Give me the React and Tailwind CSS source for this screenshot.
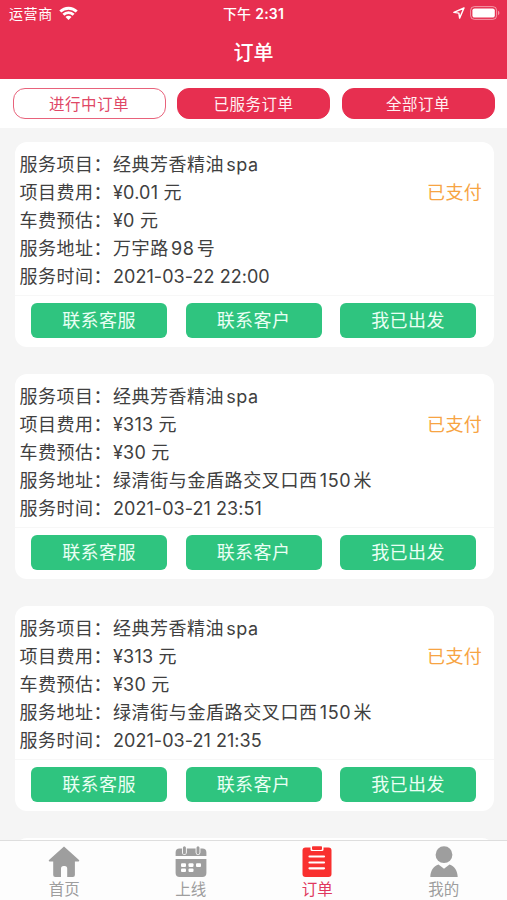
import { useState } from "react";

const filters = ["进行中订单", "已服务订单", "全部订单"];

const orders = [
  {
    id: 1,
    project: "经典芳香精油spa",
    price: "¥0.01 元",
    carFee: "¥0 元",
    address: "万宇路98号",
    time: "2021-03-22 22:00",
  },
  {
    id: 2,
    project: "经典芳香精油spa",
    price: "¥313 元",
    carFee: "¥30 元",
    address: "绿清街与金盾路交叉口西150米",
    time: "2021-03-21 23:51",
  },
  {
    id: 3,
    project: "经典芳香精油spa",
    price: "¥313 元",
    carFee: "¥30 元",
    address: "绿清街与金盾路交叉口西150米",
    time: "2021-03-21 21:35",
  },
];

function WifiIcon() {
  return (
    <svg width="19" height="14" viewBox="0 0 19 14" fill="white" className="-mt-0.5">
      <path d="M0.3 4.5a13 13 0 0 1 18.4 0l-2 2.100a10.300 10.300 0 0 0-14.400 0z" />
      <path d="M3.4 7.800a8.600 8.600 0 0 1 12.200 0l-2 2a5.800 5.800 0 0 0-8.200 0z" />
      <path d="M6.5 10.900a4.200 4.200 0 0 1 6 0L9.500 14z" />
    </svg>
  );
}

function LocationIcon() {
  return (
    <svg width="12" height="12" viewBox="0 0 12 12" fill="none">
      <path
        d="M11 1 0.900 5.400l5 .7.7 5z"
        stroke="white"
        strokeWidth="1.4"
        strokeLinejoin="round"
      />
    </svg>
  );
}

function BatteryIcon() {
  return (
    <svg width="30" height="14" viewBox="0 0 30 14" fill="none">
      <rect x="0.6" y="0.6" width="26" height="12.8" rx="3.8" stroke="white" strokeOpacity="0.5" />
      <rect x="2.4" y="2.4" width="22.4" height="9.2" rx="2.2" fill="white" />
      <path d="M28 4.8a2.4 2.4 0 0 1 0 4.4z" fill="white" fillOpacity="0.5" />
    </svg>
  );
}

function HomeIcon() {
  return (
    <svg width="32" height="32" viewBox="0 0 32 32" fill="currentColor">
      <path d="M16 0.4 31 14a0.8 0.8 0 0 1-.5 1.4H26.9V29a2 2 0 0 1-2 2H19.2V22.500a2.500 2.500 0 0 0-2.500-2.500H15.500a2.500 2.500 0 0 0-2.500 2.500V31H7.2a2 2 0 0 1-2-2V15.400H1.500A0.8 0.8 0 0 1 1 14z" />
    </svg>
  );
}

function CalendarIcon() {
  return (
    <svg width="32" height="32" viewBox="0 0 32 32" fill="currentColor">
      <path d="M4.600 2.500H27.400a4 4 0 0 1 4 4V10H0.600V6.500a4 4 0 0 1 4-4z" />
      <path d="M0.600 13H31.400V27a4 4 0 0 1-4 4H4.600a4 4 0 0 1-4-4z" />
      <g stroke="white" strokeWidth="4.800" strokeLinecap="round">
        <path d="M9.400 2.500V6.500M23 2.500V6.500" />
      </g>
      <g stroke="currentColor" strokeWidth="3" strokeLinecap="round">
        <path d="M9.400 1.800V6.700M23 1.800V6.700" />
      </g>
      <g fill="white">
        <rect x="6" y="17.300" width="5" height="3.600" rx="1" />
        <rect x="13.500" y="17.300" width="5" height="3.600" rx="1" />
        <rect x="21" y="17.300" width="5" height="3.600" rx="1" />
        <rect x="6" y="22.500" width="5" height="3.600" rx="1" />
        <rect x="13.500" y="22.500" width="5" height="3.600" rx="1" />
      </g>
    </svg>
  );
}

function OrderIcon() {
  return (
    <svg width="32" height="32" viewBox="0 0 32 32">
      <rect x="1.500" y="1.500" width="29" height="29.500" rx="3" fill="#f9302f" />
      <path d="M9.500 0H22.500V3.500a1.500 1.500 0 0 1-1.500 1.500H11a1.500 1.500 0 0 1-1.500-1.500z" fill="white" />
      <rect x="11" y="0.300" width="10" height="3.600" rx="0.800" fill="#f9302f" />
      <g stroke="white" strokeWidth="2.200" strokeLinecap="round">
        <path d="M8.500 10.500H23M8.500 16.500H23M8.500 22.300H23" />
      </g>
    </svg>
  );
}

function UserIcon() {
  return (
    <svg width="32" height="32" viewBox="0 0 32 32" fill="currentColor">
      <circle cx="16" cy="8.700" r="8.400" />
      <path d="M10.500 18.400 16 22.700 21.500 18.400C26.500 20.200 29.600 24.500 29.700 31H2.300C2.400 24.500 5.500 20.200 10.500 18.400z" />
    </svg>
  );
}

const tabs = [
  { name: "首页", icon: HomeIcon },
  { name: "上线", icon: CalendarIcon },
  { name: "订单", icon: OrderIcon },
  { name: "我的", icon: UserIcon },
];

function OrderRow({ label, value, status, valueClass = "tracking-[0.6px]" }) {
  return (
    <div className="flex h-7 items-center whitespace-pre">
      <span className="w-[93.500px] shrink-0 tracking-[0.5px]">{label}：</span>
      <span className={`flex-1 [text-autospace:normal] ${valueClass}`}>{value}</span>
      {status && <span className="tracking-[0.3px] text-[#f7a443]">{status}</span>}
    </div>
  );
}

function OrderCard({ order }) {
  return (
    <div className="h-[205px] shrink-0 rounded-xl bg-white">
      <div className="h-[154px] border-b border-[#f7f7f7] pt-[9px] pr-3 pl-[5px] text-lg leading-7 text-[#404040]">
        <OrderRow label="服务项目" value={order.project} valueClass="tracking-[0.5px]" />
        <OrderRow label="项目费用" value={order.price} status="已支付" valueClass="tracking-[0.2px]" />
        <OrderRow label="车费预估" value={order.carFee} valueClass="tracking-[0.2px]" />
        <OrderRow label="服务地址" value={order.address} />
        <OrderRow label="服务时间" value={order.time} valueClass="tracking-[0.05px]" />
      </div>
      <div className="flex justify-between pt-[7px] pr-[18px] pl-[16.500px]">
        {["联系客服", "联系客户", "我已出发"].map((action) => (
          <button
            key={action}
            className="h-[35px] w-[136px] rounded-md bg-[#2fc47f] text-lg leading-[35px] tracking-[0.4px] text-[#eafff4]"
          >
            {action}
          </button>
        ))}
      </div>
    </div>
  );
}

export default function App() {
  const [filter, setFilter] = useState("进行中订单");
  const [tab, setTab] = useState("订单");

  return (
    <div className="flex h-[900px] w-[507px] flex-col overflow-hidden bg-[#f5f5f5] font-['Inter','Noto_Sans_CJK_SC',sans-serif]">
      <header className="h-[79px] shrink-0 bg-[#e72f50] text-white">
        <div className="grid h-7 grid-cols-3 items-center px-[9px] text-sm">
          <div className="flex items-center gap-1.5">
            <span className="tracking-[0.6px]">运营商</span>
            <WifiIcon />
          </div>
          <div className="text-center font-medium tracking-[0.2px] [text-autospace:no-autospace]">
            下午 <span className="font-semibold">2:31</span>
          </div>
          <div className="-mr-0.5 flex -translate-y-px items-center justify-end gap-[5px]">
            <LocationIcon />
            <BatteryIcon />
          </div>
        </div>
        <h1 className="text-center text-xl leading-[50px] font-medium">订单</h1>
      </header>

      <div className="flex h-[49px] shrink-0 justify-between bg-white px-[12.500px] pt-[9px]">
        {filters.map((name) => (
          <button
            key={name}
            onClick={() => setFilter(name)}
            className={`h-[31px] w-[153px] rounded-xl border pt-px text-[15.500px] leading-[29px] tracking-[0.5px] ${
              filter === name
                ? "border-[#e8627b] bg-white text-[#e04766]"
                : "border-[#e72f50] bg-[#e72f50] text-[#fff0f2]"
            }`}
          >
            {name}
          </button>
        ))}
      </div>

      <main className="flex min-h-0 flex-1 flex-col gap-[27px] overflow-hidden pt-3.5 pr-[13px] pl-[14.500px]">
        {orders.map((order) => (
          <OrderCard key={order.id} order={order} />
        ))}
        <div className="h-10 shrink-0 rounded-xl bg-white" />
      </main>

      <nav className="grid h-[60px] shrink-0 grid-cols-4 border-t border-[#dedede] bg-[#fdfdfd] pl-px">
        {tabs.map(({ name, icon: Icon }) => (
          <button
            key={name}
            onClick={() => setTab(name)}
            className={`flex flex-col items-center pt-[5px] ${
              tab === name ? "text-[#e0385e]" : "text-[#9e9e9e]"
            }`}
          >
            <Icon />
            <span className="pt-px text-[15.500px] leading-[22px]">{name}</span>
          </button>
        ))}
      </nav>
    </div>
  );
}
